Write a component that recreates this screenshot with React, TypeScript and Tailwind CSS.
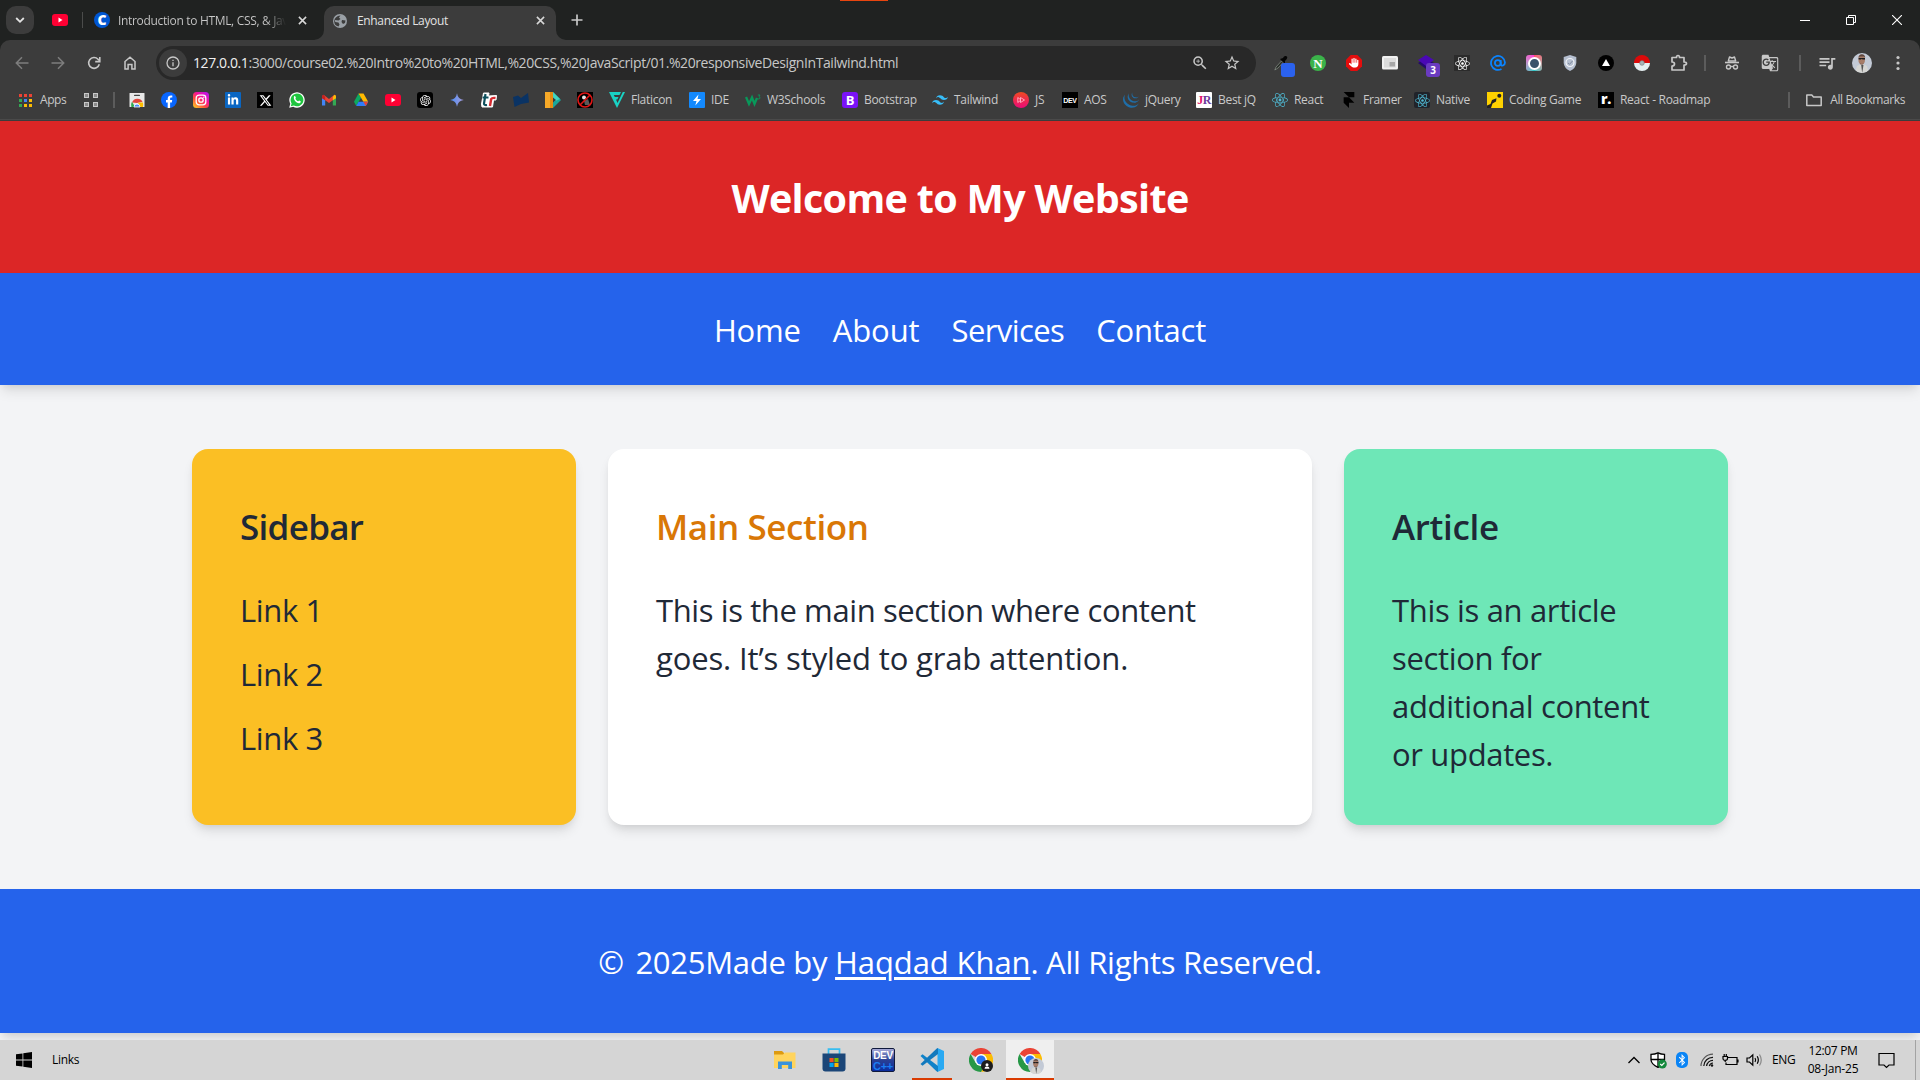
import React from "react";
import {
  FaLinkedinIn,
  FaXTwitter,
  FaReact,
  FaBluetoothB,
  FaHand,
} from "react-icons/fa6";
import { SiFramer, SiTailwindcss, SiJquery } from "react-icons/si";
import { RiOpenaiFill } from "react-icons/ri";
import { MdStarBorder, MdZoomIn, MdQueueMusic, MdOutlineExtension, MdGTranslate } from "react-icons/md";

/* ---------- small drawings ---------- */

const YouTube = () => (
  <svg viewBox="0 0 16 16" className="size-4">
    <rect y="2" width="16" height="12" rx="3" fill="#ff0033" />
    <path d="M6.500 5.600v4.800l4-2.400z" fill="#fff" />
  </svg>
);

const ChromeLogo = ({ className }: { className?: string }) => (
  <svg viewBox="0 0 24 24" className={className}>
    <path d="M12 12 L1.600 6 A12 12 0 0 1 22.400 6 L12 6z" fill="#ea4335" />
    <path d="M12 6 H22.400 A12 12 0 0 1 12 24 L17.200 15z" fill="#fbbc04" />
    <path d="M1.600 6 A12 12 0 0 0 12 24 L17.200 15 L12 12 L6.800 15z" fill="#279847" />
    <circle cx="12" cy="12" r="6" fill="#fff" />
    <circle cx="12" cy="12" r="4.600" fill="#2a75f0" />
  </svg>
);

const Instagram = () => (
  <svg viewBox="0 0 16 16" className="size-4">
    <defs>
      <linearGradient id="ig" x1="0.1" y1="1" x2="0.9" y2="0">
        <stop offset="0" stopColor="#ffc928" />
        <stop offset="0.35" stopColor="#ff4f3a" />
        <stop offset="0.65" stopColor="#f50fa0" />
        <stop offset="1" stopColor="#b418f0" />
      </linearGradient>
    </defs>
    <rect width="16" height="16" rx="3.500" fill="url(#ig)" />
    <rect x="3.200" y="3.200" width="9.600" height="9.600" rx="2.800" fill="none" stroke="#fff" strokeWidth="1.300" />
    <circle cx="8" cy="8" r="2.200" fill="none" stroke="#fff" strokeWidth="1.300" />
    <circle cx="10.800" cy="5.200" r="0.700" fill="#fff" />
  </svg>
);

const Facebook = () => (
  <svg viewBox="0 0 16 16" className="size-4">
    <circle cx="8" cy="8" r="8" fill="#0866ff" />
    <path d="M6.700 16V10.400H5V8h1.700V6.900c0-2.400 1.200-3.500 3.300-3.500.5 0 1 .1 1.300.1v2.100h-.9c-1 0-1.300.4-1.300 1.300V8h2.100l-.4 2.400H9.100V16z" fill="#fff" />
  </svg>
);

const WhatsApp = () => (
  <svg viewBox="0 0 16 16" className="size-4">
    <path d="M.2 15.800l1.100-4A7.700 7.700 0 1 1 4.200 14.700z" fill="#fff" />
    <path d="M1.800 14.200l.8-2.800a6.400 6.400 0 1 1 2.200 2.100z" fill="#1fc53f" />
    <path d="M5.200 4.300c.5-.5.9-.3 1.100.1l.6 1.300c.1.3-.5.8-.5 1 .4 1.100 1.600 2.200 2.700 2.600.3 0 .7-.9 1-.8l1.500.7c.4.3 0 1.300-.5 1.700-2.600 1.700-7.700-3.300-5.900-6.600z" fill="#fff" />
  </svg>
);

const Gmail = () => (
  <svg viewBox="0 0 16 16" className="size-4">
    <path d="M1 3.500V13.500H4.200V6z" fill="#4285f4" />
    <path d="M15 3.500V13.500H11.800V6z" fill="#34a853" />
    <path d="M1 4.200 L2.600 2.700 L8 7 L13.400 2.700 L15 4.200 V6 L8 11 L1 6z" fill="#ea4335" />
    <path d="M11.800 5 L13.400 2.700 Q15 3 15 4.500 V6.200 L11.800 8.300z" fill="#fbbc04" />
    <path d="M4.200 5 L2.600 2.700 Q1 3 1 4.500 V6.200 L4.200 8.300z" fill="#c5221f" />
  </svg>
);

const Drive = () => (
  <svg viewBox="0 0 16 16" className="size-4">
    <path d="M5.500 1.500 L1 9.800 L3.200 14 L8 5.800z" fill="#0da960" />
    <path d="M5.500 1.500 H10.500 L15.200 9.800 H10.400z" fill="#ffba00" />
    <path d="M3.200 14 L5.600 9.800 H15.200 L12.800 14z" fill="#2f7dfa" />
    <path d="M11.600 11.900 L10.400 9.800 H15.200 L12.800 14z" fill="#ea4335" />
  </svg>
);

const Webstore = () => (
  <svg viewBox="0 0 16 16" className="size-4">
    <rect x="0.500" y="1" width="15" height="14" rx="0.500" fill="#e8e8e8" />
    <rect x="5" y="2.800" width="6" height="1.300" rx="0.600" fill="#444" />
    <path d="M3 10.500 A5.900 5.900 0 0 1 13.600 9.800 L8 11z" fill="#e0443a" />
    <path d="M2.300 15 Q1.500 12 3 9.700 L6 15z" fill="#2da94f" />
    <path d="M9.500 10.500 H14 Q14.500 12.500 13.900 15 H9z" fill="#fdbd00" />
    <path d="M5 15 A3 3 0 0 1 11 15z" fill="#4a8bf5" stroke="#fff" strokeWidth="0.800" />
  </svg>
);

const Gemini = () => (
  <svg viewBox="0 0 16 16" className="size-4">
    <defs>
      <linearGradient id="gm" x1="0" y1="0" x2="1" y2="0">
        <stop offset="0" stopColor="#4c8df6" />
        <stop offset="1" stopColor="#a79bd8" />
      </linearGradient>
    </defs>
    <path d="M8 1.200 Q8.800 7.200 14.800 8 Q8.800 8.800 8 14.800 Q7.200 8.800 1.200 8 Q7.200 7.200 8 1.200z" fill="url(#gm)" />
  </svg>
);

const Tr = () => (
  <svg viewBox="0 0 16 16" className="size-4">
    <path d="M2.500 1 H8 L7.500 4 L15.500 3.500 L15 8 L12.500 8 L11.500 15 H1 L0.500 12 z" fill="#fff" stroke="#fff" strokeLinejoin="round" />
    <path d="M4.500 2 L3 11.500 Q3 13.500 6 13 M1.500 5.500 H7.500" fill="none" stroke="#0d4f5c" strokeWidth="2.200" />
    <path d="M9 14 L10.200 7 Q11 5.500 14.500 6" fill="none" stroke="#d62b31" strokeWidth="2.400" />
  </svg>
);

const NavyFlag = () => (
  <svg viewBox="0 0 16 16" className="size-4">
    <path d="M0 5 L5 3.500 L8 6 L15 1 L16 10.500 L8 12 L1.500 15z" fill="#0a3364" />
  </svg>
);

const PlayDoor = () => (
  <svg viewBox="0 0 16 16" className="size-4">
    <path d="M0 0 H5 V16 H0z" fill="#f7a928" />
    <path d="M5 0 H8 V16 H5z" fill="#e58a11" />
    <path d="M8 0 L16 8 L8 16z" fill="#18a79b" />
    <path d="M8 0 L15 7 L8 10z" fill="#3fd3c0" />
    <path d="M8 5.500 L11 8 L8 10.500z" fill="#3c3c3c" />
  </svg>
);

const Forbidden = () => (
  <svg viewBox="0 0 16 16" className="size-4">
    <rect width="16" height="16" fill="#000" />
    <circle cx="7" cy="5.500" r="2" fill="#e5e5e5" />
    <path d="M7 9 L11 7 L13 13 H8z" fill="#5a5a5a" />
    <circle cx="8" cy="8" r="7" fill="none" stroke="#e01616" strokeWidth="1.600" />
    <path d="M3 13 L13 3" stroke="#e01616" strokeWidth="1.600" />
  </svg>
);

const Flaticon = () => (
  <svg viewBox="0 0 16 16" className="size-4">
    <path d="M0 0 H12 L10.500 3 H4.800 L5.800 5 H9.500 L8.300 7.500 H7 L8.500 11 L13.800 0 H16 L8 16z" fill="#19d3c5" />
  </svg>
);

const Bolt = () => (
  <svg viewBox="0 0 16 16" className="size-4">
    <rect width="16" height="16" rx="1" fill="#1389fd" />
    <path d="M9.500 2.500 L4 9 H7.500 L6.300 13.500 L12 7 H8.500z" fill="#fff" />
  </svg>
);

const W3 = () => (
  <svg viewBox="0 0 16 16" className="size-4">
    <path d="M1 5 L4 12 L7 5.500 L9.500 12 L12 6" fill="none" stroke="#08985a" strokeWidth="2.300" />
    <path d="M12.800 3 H15 L14 4.500 Q15.500 5 14.800 6.500 Q14 7.300 12.800 6.800" fill="none" stroke="#08985a" strokeWidth="0.900" />
  </svg>
);

const Tile = ({ className, children }: { className: string; children: React.ReactNode }) => (
  <span className={"flex size-4 shrink-0 items-center justify-center leading-none " + className}>{children}</span>
);

const PlayDisc = () => (
  <svg viewBox="0 0 16 16" className="size-4">
    <defs>
      <linearGradient id="pd" x1="0" y1="0" x2="0" y2="1">
        <stop offset="0" stopColor="#f04a22" />
        <stop offset="1" stopColor="#ea0a78" />
      </linearGradient>
    </defs>
    <circle cx="8" cy="8" r="8" fill="url(#pd)" />
    <path d="M4.800 5.500 L8 8 L4.800 10.500z M7.500 5.500 L11.500 8 L7.500 10.500z" fill="none" stroke="#ffb3c8" strokeWidth="0.900" />
  </svg>
);

const Pencils = () => (
  <svg viewBox="0 0 16 16" className="size-4">
    <rect width="16" height="16" fill="#ffd200" />
    <circle cx="12.300" cy="3.800" r="2" fill="#222" />
    <path d="M0 16 V13.500 L3.500 12 L5 8 L9.500 6.200 L9 9.500 L5.500 11.500 L4 16z" fill="#222" />
  </svg>
);

const Folder = () => (
  <svg viewBox="0 0 18 16" className="h-4 w-[18px]" fill="none" stroke="#c7c7c7" strokeWidth="1.500">
    <path d="M1.800 3 H6.800 L8.500 5 H16.200 V13.500 H1.800z" strokeLinejoin="round" />
  </svg>
);

const Portrait = ({ id, className }: { id: string; className: string }) => (
  <svg viewBox="0 0 20 20" className={className}>
    <clipPath id={id}>
      <circle cx="10" cy="10" r="10" />
    </clipPath>
    <g clipPath={"url(#" + id + ")"}>
      <rect width="20" height="20" fill="#c3cad6" />
      <path d="M3 20 L5 13 L10 10.500 L15 13 L17 20z" fill="#d6d6d3" />
      <path d="M9.200 12 L10.200 20 L11.500 12z" fill="#555" />
      <ellipse cx="9.700" cy="6.500" rx="3.300" ry="4.700" fill="#a67c68" />
      <path d="M6.300 4.800 Q7 1 10 1.200 Q13 1.400 13.200 4.800 L12 3.500 H7.500z" fill="#5d463e" />
      <path d="M6.500 5 H13 V6.500 H10.500 L9.800 5.700 L9 6.500 H6.800z" fill="#1c1c1e" />
      <path d="M7.500 10 Q10 12 12 10 L11 11.500 H8.500z" fill="#6b4c40" />
    </g>
  </svg>
);

/* ---------- tab strip ---------- */

const Cross = () => (
  <svg viewBox="0 0 10 10" className="size-[9px]" stroke="#d8d8d8" strokeWidth="1.700">
    <path d="M1 1 L9 9 M9 1 L1 9" />
  </svg>
);

function TabStrip() {
  return (
    <div className="relative flex h-10 items-center bg-[#202221]">
      <span className="absolute left-[840px] top-0 h-px w-12 bg-[#e8450f]" />
      <button className="ml-1.5 flex size-7 items-center justify-center rounded-[10px] bg-[#3c3c3c]">
        <svg viewBox="0 0 10 10" className="size-[10px]" fill="none" stroke="#e3e3e3" strokeWidth="1.800">
          <path d="M1.200 3 L5 6.800 L8.800 3" />
        </svg>
      </button>
      <span className="ml-[18px]">
        <YouTube />
      </span>
      <span className="ml-[14px] h-4 w-px bg-[#4b4c4b]" />
      <Tile className="ml-[11px] rounded-full bg-[#0056d2] text-[14px] font-extrabold text-white">C</Tile>
      <span className="ml-2 w-[168px] overflow-hidden whitespace-nowrap bg-linear-to-r from-[#c9c9c9] from-88% to-transparent bg-clip-text pt-0.5 text-xs leading-4 tracking-[-0.33px] text-transparent">
        Introduction to HTML, CSS, &amp; JavaScript
      </span>
      <span className="ml-[12px]">
        <Cross />
      </span>
      <div className="relative ml-[17px] flex h-[34px] w-[232px] items-center self-end rounded-t-[10px] bg-[#3c3c3c] pb-[5px]">
        <svg viewBox="0 0 10 10" className="absolute -left-2.5 bottom-0 size-2.5">
          <path d="M10 0 V10 H0 A10 10 0 0 0 10 0z" fill="#3c3c3c" />
        </svg>
        <svg viewBox="0 0 10 10" className="absolute -right-2.5 bottom-0 size-2.5">
          <path d="M0 0 V10 H10 A10 10 0 0 1 0 0z" fill="#3c3c3c" />
        </svg>
        <svg viewBox="0 0 14 14" className="ml-[9px] size-[14px]">
          <circle cx="7" cy="7" r="7" fill="#9aa0a6" />
          <path d="M7.500 1.500 L6 3.500 L7.500 5 L5.500 6.500 L2 6 L2.200 8 L5.500 8.500 L6.500 10.500 L5.500 12.500 Q1 11.500 1.200 7 Q1.800 2 7.500 1.500z M9 6 L12.500 6.500 L12 9 L10 10 L8.500 8z" fill="#3c3c3c" />
        </svg>
        <span className="ml-[10px] w-[179px] pt-px text-xs leading-4 tracking-[-0.35px] text-[#e3e3e3]">Enhanced Layout</span>
        <Cross />
      </div>
      <svg viewBox="0 0 12 12" className="ml-[15px] size-3" stroke="#c7c7c7" strokeWidth="1.700">
        <path d="M6 0.500 V11.500 M0.500 6 H11.500" />
      </svg>
      <div className="ml-auto flex items-center gap-9 pr-[18px]">
        <svg viewBox="0 0 10 10" className="size-2.5" shapeRendering="crispEdges">
          <rect y="5" width="10" height="1" fill="#fff" />
        </svg>
        <svg viewBox="0 0 10 10" className="size-2.5" fill="none" stroke="#fff">
          <path d="M0.500 2.500 H7.500 V9.500 H0.500z M2.500 2.500 V0.500 H9.500 V7.500 H7.500" />
        </svg>
        <svg viewBox="0 0 10 10" className="size-2.5" stroke="#fff" strokeWidth="1.100">
          <path d="M0 0 L10 10 M10 0 L0 10" />
        </svg>
      </div>
    </div>
  );
}

/* ---------- toolbar ---------- */

const Slot = ({ children }: { children: React.ReactNode }) => (
  <span className="flex w-9 shrink-0 items-center justify-center">{children}</span>
);

function Toolbar() {
  return (
    <div className="flex h-[46px] items-center pl-1">
      <Slot>
        <svg viewBox="0 0 14 14" className="size-[14px]" fill="none" stroke="#7d7d7d" strokeWidth="1.500">
          <path d="M13.500 7 H1.500 M7 1.200 L1.300 7 L7 12.800" />
        </svg>
      </Slot>
      <Slot>
        <svg viewBox="0 0 14 14" className="size-[14px]" fill="none" stroke="#7d7d7d" strokeWidth="1.500">
          <path d="M0.500 7 H12.500 M7 1.200 L12.700 7 L7 12.800" />
        </svg>
      </Slot>
      <Slot>
        <svg viewBox="0 0 14 14" className="size-[14px]" fill="none" stroke="#c7c7c7" strokeWidth="1.600">
          <path d="M12.300 8.300 A5.400 5.400 0 1 1 11 3.200 L12.200 4.600" />
          <path d="M12.800 1 V5.600 H8.200" />
        </svg>
      </Slot>
      <Slot>
        <svg viewBox="0 0 14 14" className="size-[14px]" fill="none" stroke="#c7c7c7" strokeWidth="1.500">
          <path d="M2 13 V5.500 L7 1.300 L12 5.500 V13 H8.900 V8.500 H5.100 V13z" />
        </svg>
      </Slot>
      <div className="ml-2 flex h-[34px] w-[1100px] items-center rounded-full bg-[#282828] pl-[3px]">
        <span className="flex size-7 items-center justify-center rounded-full bg-[#3c3c3c]">
          <svg viewBox="0 0 14 14" className="size-[14px]" fill="none" stroke="#c7c7c7" strokeWidth="1.300">
            <circle cx="7" cy="7" r="6" />
            <path d="M7 6.300 V10.200 M7 3.800 V5.100" />
          </svg>
        </span>
        <span className="ml-[6px] text-[14px] leading-5 tracking-[-0.41px] text-[#c7c7c7]">
          <span className="text-[#f0f0f0]">127.0.0.1</span>
          :3000/course02.%20Intro%20to%20HTML,%20CSS,%20JavaScript/01.%20responsiveDesignInTailwind.html
        </span>
        <MdZoomIn className="ml-auto size-[18px] text-[#c7c7c7]" />
        <MdStarBorder className="ml-[14px] mr-[15px] size-[18px] text-[#c7c7c7]" />
      </div>
      <div className="ml-2 flex">
        <Slot>
          <span className="relative size-4">
            <svg viewBox="0 0 16 16" className="size-4">
              <path d="M0.800 15 L2 12 L7.500 6 L9 7.500 L4 13z" fill="#262b26" stroke="#9aa59a" strokeWidth="0.600" />
              <path d="M6 4 L11 9 L11 6 Q15 2 12 1 Q10 0.500 9 3z" fill="#050505" />
            </svg>
            <span className="absolute left-[7px] top-2 size-[14px] rounded-[3px] bg-[#2b62ee]" />
          </span>
        </Slot>
        <Slot>
          <Tile className="rounded-full bg-[#3bb34a] font-['Liberation_Serif'] text-[13px] font-bold text-white">N</Tile>
        </Slot>
        <Slot>
          <svg viewBox="0 0 16 16" className="size-4">
            <path d="M4.700 0 H11.300 L16 4.700 V11.300 L11.300 16 H4.700 L0 11.300 V4.700z" fill="#e40d0d" />
            <FaHand x="3" y="2.800" size={10} color="#fff" />
          </svg>
        </Slot>
        <Slot>
          <svg viewBox="0 0 16 16" className="size-4">
            <rect y="1" width="16" height="13.500" rx="1.500" fill="#f1f1f1" />
            <rect x="2" y="3" width="12" height="9.500" fill="#dcdcdc" />
            <rect x="7.500" y="7" width="5.500" height="4.500" fill="#a7a7a7" />
          </svg>
        </Slot>
        <Slot>
          <span className="relative size-4">
            <svg viewBox="0 0 16 16" className="size-4">
              <path d="M0 8 L8 3 L16 8 L8 14z" fill="#240a6b" />
              <path d="M0 5 L8 0 L16 5 L8 11z" fill="#4a08b5" />
            </svg>
            <span className="absolute left-2 top-2 flex size-[14px] items-center justify-center rounded-[3px] bg-[#6a3bc0] text-[10px] font-bold leading-none text-white">
              3
            </span>
          </span>
        </Slot>
        <Slot>
          <Tile className="bg-[#2b2b2b]">
            <FaReact className="size-[15px] text-white" />
          </Tile>
        </Slot>
        <Slot>
          <svg viewBox="0 0 16 16" className="size-4" fill="none" stroke="#0a84ff" strokeWidth="1.800">
            <circle cx="7.800" cy="8" r="2.900" />
            <path d="M10.700 5 V9 Q11 11 13 10.500 Q15 9.500 15 7.500 A7 7 0 1 0 11.500 14" />
          </svg>
        </Slot>
        <Slot>
          <Tile className="rounded-[3px] bg-conic from-[#ff4d6d] via-[#18c7c7] to-[#ff37d0]">
            <span className="size-[13px] rounded-full border-2 border-white bg-[#39536b]" />
          </Tile>
        </Slot>
        <Slot>
          <svg viewBox="0 0 16 16" className="size-4">
            <path d="M8 0 L14.300 2 V8 Q14 13 8 16 Q2 13 1.700 8 V2z" fill="#b5bfd0" />
            <circle cx="8" cy="7.500" r="4" fill="none" stroke="#f2f4f8" strokeWidth="1.200" />
            <path d="M6 8 L7.500 9.300 L10.500 6" fill="none" stroke="#7d889c" />
          </svg>
        </Slot>
        <Slot>
          <svg viewBox="0 0 16 16" className="size-4">
            <circle cx="8" cy="8" r="8" fill="#000" />
            <path d="M8 4 L12 11 H4z" fill="#fff" />
          </svg>
        </Slot>
        <Slot>
          <svg viewBox="0 0 16 16" className="size-4">
            <path d="M0 8 A8 8 0 0 1 16 8z" fill="#dc0a0a" />
            <path d="M0 8 A8 8 0 0 0 16 8z" fill="#e6f0f2" />
            <circle cx="8" cy="8" r="2.300" fill="#a9b4b7" stroke="#7d8588" strokeWidth="0.700" />
          </svg>
        </Slot>
        <Slot>
          <svg viewBox="0 0 18 18" className="ml-0.5 size-[18px]" fill="none" stroke="#c7c7c7" strokeWidth="1.700" strokeLinejoin="round">
            <path d="M2 3.500 H6.500 Q6.500 1.500 8 1.500 Q9.500 1.500 9.500 3.500 H14 V8 Q16.500 8 16.500 9.500 Q16.500 11 14 11 V16 H2 V12 Q4.500 12 4.500 10 Q4.500 8 2 8z" />
          </svg>
        </Slot>
      </div>
      <span className="ml-2 h-4 w-0.5 bg-[#5c5c5c]" />
      <svg viewBox="0 0 16 16" className="ml-[18px] size-4" fill="none" stroke="#c7c7c7" strokeWidth="1.400">
        <path d="M4.300 6 L5.500 2 L8 3 L10.500 2 L11.700 6z" strokeLinejoin="round" />
        <path d="M1 7.500 H15" strokeWidth="1.600" />
        <circle cx="4.500" cy="12" r="2" />
        <circle cx="11.500" cy="12" r="2" />
        <path d="M6.500 11.500 H9.500" />
      </svg>
      <MdGTranslate className="ml-[21px] size-[18px] text-[#c7c7c7]" />
      <span className="ml-5 h-4 w-0.5 bg-[#5c5c5c]" />
      <MdQueueMusic className="ml-4 size-5 text-[#c7c7c7]" />
      <Portrait id="profile" className="ml-[15px] size-5" />
      <svg viewBox="0 0 4 16" className="ml-6 h-4 w-1" fill="#c7c7c7">
        <circle cx="2" cy="2.500" r="1.600" />
        <circle cx="2" cy="8" r="1.600" />
        <circle cx="2" cy="13.500" r="1.600" />
      </svg>
    </div>
  );
}

/* ---------- bookmarks ---------- */

const shortcuts = [
  <Webstore />,
  <Facebook />,
  <Instagram />,
  <Tile className="rounded-[1px] bg-[#0a66c2]"><FaLinkedinIn className="size-3 text-white" /></Tile>,
  <Tile className="bg-black"><FaXTwitter className="size-[13px] text-white" /></Tile>,
  <WhatsApp />,
  <Gmail />,
  <Drive />,
  <YouTube />,
  <Tile className="rounded-[3px] bg-black"><RiOpenaiFill className="size-[13px] text-white" /></Tile>,
  <Gemini />,
  <Tr />,
  <NavyFlag />,
  <PlayDoor />,
  <Forbidden />,
];

const bookmarks: { label: string; width: string; icon: React.ReactNode }[] = [
  { label: "Flaticon", width: "w-20", icon: <Flaticon /> },
  { label: "IDE", width: "w-14", icon: <Bolt /> },
  { label: "W3Schools", width: "w-[97px]", icon: <W3 /> },
  { label: "Bootstrap", width: "w-[90px]", icon: <Tile className="rounded-[3px] bg-[#7a12f7] text-[13px] font-bold text-white">B</Tile> },
  { label: "Tailwind", width: "w-[81px]", icon: <SiTailwindcss className="size-4 text-[#38bdf8]" /> },
  { label: "JS", width: "w-[49px]", icon: <PlayDisc /> },
  {
    label: "AOS",
    width: "w-[61px]",
    icon: <Tile className="bg-black font-['Liberation_Sans'] text-[7px] font-bold tracking-[-0.3px] text-white">DEV</Tile>,
  },
  { label: "jQuery", width: "w-[73px]", icon: <SiJquery className="size-4 text-[#1f6ea8]" /> },
  {
    label: "Best jQ",
    width: "w-[76px]",
    icon: (
      <Tile className="rounded-[1px] bg-white font-['Liberation_Serif'] text-[12px] font-bold tracking-[-0.5px]">
        <span className="text-[#e3126c]">J</span>
        <span className="text-[#6b3a9a]">R</span>
      </Tile>
    ),
  },
  { label: "React", width: "w-[69px]", icon: <FaReact className="size-4 text-[#4fb9d3]" /> },
  { label: "Framer", width: "w-[73px]", icon: <SiFramer className="size-4 text-black" /> },
  {
    label: "Native",
    width: "w-[73px]",
    icon: <Tile className="rounded-[2px] bg-[#20232a]"><FaReact className="size-[15px] text-[#4fb9d3]" /></Tile>,
  },
  { label: "Coding Game", width: "w-[111px]", icon: <Pencils /> },
  {
    label: "React - Roadmap",
    width: "w-[130px]",
    icon: <Tile className="bg-black pb-0.5 text-[14px] font-extrabold text-white">r.</Tile>,
  },
];

const appDots = [
  "bg-[#ea4335]", "bg-[#ea4335]", "bg-[#ea4335]",
  "bg-[#34a853]", "bg-[#4285f4]", "bg-[#fbbc04]",
  "bg-[#34a853]", "bg-[#fbbc04]", "bg-[#fbbc04]",
];

function BookmarksBar() {
  return (
    <div className="flex h-[34px] items-center border-b border-[#4a4a4a] pb-[5px] pl-[19px] text-xs text-[#c9c9c9]">
      <span className="grid grid-cols-3 gap-[2px]">
        {appDots.map((c, i) => (
          <span key={i} className={"size-[3px] " + c} />
        ))}
      </span>
      <span className="ml-2 w-11 tracking-[-0.42px]">Apps</span>
      <span className="grid grid-cols-2 gap-1">
        {[0, 1, 2, 3].map((i) => (
          <span key={i} className="size-[5px] border border-[#c7c7c7] bg-[#8a8a8a]" />
        ))}
      </span>
      <span className="ml-[15px] h-4 w-0.5 bg-[#5c5c5c]" />
      <div className="ml-[14px] flex gap-4 pr-4">
        {shortcuts.map((icon, i) => (
          <span key={i} className="size-4">{icon}</span>
        ))}
      </div>
      {bookmarks.map((b) => (
        <span key={b.label} className={"flex shrink-0 items-center gap-1.5 whitespace-nowrap tracking-[-0.3px] " + b.width}>
          {b.icon}
          {b.label}
        </span>
      ))}
      <span className="ml-auto h-4 w-0.5 bg-[#5c5c5c]" />
      <span className="ml-[15px] mr-[15px] flex items-center gap-[7px] tracking-[-0.4px]">
        <Folder />
        All Bookmarks
      </span>
    </div>
  );
}

/* ---------- web page ---------- */

const cardShadow = "shadow-[0_8px_12px_-2px_rgba(0,0,0,0.1),0_4px_8px_-4px_rgba(0,0,0,0.1)]";

function Page() {
  return (
    <div className="flex h-[919px] flex-col overflow-hidden bg-[#f3f4f6] text-[31px] leading-[48px] text-[#1f2937]">
      <header className="bg-[#dc2626] px-12 pb-[47px] pt-[49px] text-center text-white">
        <h1 className="text-[39.5px] font-bold leading-14 tracking-[-0.67px]">Welcome to My Website</h1>
      </header>
      <nav className="relative flex justify-center gap-8 bg-[#2563eb] pb-[31px] pt-[33px] text-white shadow-[0_8px_12px_-2px_rgba(0,0,0,0.1),0_4px_8px_-4px_rgba(0,0,0,0.1)]">
        <a className="tracking-[-0.2px]">Home</a>
        <a className="tracking-[-0.1px]">About</a>
        <a className="tracking-[-0.6px]">Services</a>
        <a className="tracking-[-0.2px]">Contact</a>
      </nav>
      <main className="mx-auto flex w-[1536px] gap-8 py-16">
        <aside className={"w-96 rounded-2xl bg-[#fbbf24] px-12 pb-12 pt-[50px] " + cardShadow}>
          <h2 className="text-[35px] font-semibold leading-14 tracking-[-0.7px]">Sidebar</h2>
          <ul className="mt-[31px] flex flex-col gap-4 tracking-[-0.35px]">
            <li>Link 1</li>
            <li>Link 2</li>
            <li>Link 3</li>
          </ul>
        </aside>
        <section className={"flex-1 rounded-2xl bg-white px-12 pb-12 pt-[50px] " + cardShadow}>
          <h2 className="text-[35px] font-semibold leading-14 tracking-[-0.42px] text-[#d97706]">Main Section</h2>
          <p className="mt-[31px]">
            <span className="tracking-[-0.4px]">This is the main section where content</span>
            <br />
            <span className="tracking-[-0.14px]">goes. It’s styled to grab attention.</span>
          </p>
        </section>
        <article className={"w-96 rounded-2xl bg-[#6ee7b7] px-12 pb-[47px] pt-[50px] " + cardShadow}>
          <h2 className="text-[35px] font-semibold leading-14 tracking-[-0.33px]">Article</h2>
          <p className="mt-[31px] tracking-[-0.34px]">
            This is an article
            <br />
            section for
            <br />
            additional content
            <br />
            or updates.
          </p>
        </article>
      </main>
      <footer className="bg-[#2563eb] pb-[47px] pt-[49px] text-center tracking-[-0.28px] text-white shadow-[0_8px_12px_-2px_rgba(0,0,0,0.1),0_4px_8px_-4px_rgba(0,0,0,0.1)]">
        <span className="mr-1">©</span> 2025Made by{" "}
        <a className="tracking-[-0.1px] underline decoration-[3px] underline-offset-[3px]">Haqdad Khan</a>. All Rights Reserved.
      </footer>
    </div>
  );
}

/* ---------- taskbar ---------- */

const TaskSlot = ({ className, children }: { className?: string; children: React.ReactNode }) => (
  <span className={"relative flex h-10 w-12 items-center justify-center " + (className ?? "")}>{children}</span>
);

function Taskbar() {
  return (
    <div className="flex h-10 items-center bg-[#d5d5d5] text-xs text-black">
      <svg viewBox="0 0 16 16" className="ml-4 size-4">
        <path d="M0 2.300 L6.500 1.400 V7.600 H0z M7.300 1.300 L16 0 V7.600 H7.300z M0 8.400 H6.500 V14.600 L0 13.700z M7.300 8.400 H16 V16 L7.300 14.700z" />
      </svg>
      <span className="ml-5 w-[709px] tracking-[-0.3px]">Links</span>
      <TaskSlot>
        <svg viewBox="0 0 22 18" className="h-[18px] w-[22px]">
          <path d="M0 0 H8 L10 2 V5 H0z" fill="#dd9a10" />
          <path d="M0 3.500 H9 L11 1.500 H21.500 V17 H0z" fill="#ffd45e" />
          <path d="M4 18 V10.500 H18 V18 H14.200 V14 H7.800 V18z" fill="#3a93dc" />
        </svg>
      </TaskSlot>
      <TaskSlot className="ml-px">
        <svg viewBox="0 0 24 24" className="size-6">
          <path d="M6.500 6 V1.200 H17.500 V6" fill="none" stroke="#37bdf0" strokeWidth="1.700" />
          <path d="M0.500 5.500 H23.500 V20.500 Q23.500 23.500 20.500 23.500 H3.500 Q0.500 23.500 0.500 20.500z" fill="#1b4678" />
          <path d="M7.500 10 H11.600 V14.100 H7.500z" fill="#f25022" />
          <path d="M12.400 10 H16.500 V14.100 H12.400z" fill="#7fba00" />
          <path d="M7.500 14.900 H11.600 V19 H7.500z" fill="#00a4ef" />
          <path d="M12.400 14.900 H16.500 V19 H12.400z" fill="#ffb900" />
        </svg>
      </TaskSlot>
      <TaskSlot className="ml-px">
        <span className="flex size-6 flex-col items-center rounded-[2px] border border-[#101a3c] bg-linear-to-b from-[#a9abd8] via-[#2a3f94] to-[#0a2d9e] font-['Liberation_Sans'] font-bold tracking-[-0.3px]">
          <span className="mt-px text-[10px] leading-[11px] text-white">DEV</span>
          <span className="text-[11px] leading-[10px] text-[#1b7df2]">C++</span>
        </span>
      </TaskSlot>
      <TaskSlot className="ml-px">
        <svg viewBox="0 0 24 24" className="size-6">
          <path d="M17.500 0 L24 3 V21 L17.500 24z" fill="#29a9f2" />
          <path d="M0.500 8 L2.500 6.300 L18 18 V24 L16.500 23.300z" fill="#0f82c9" />
          <path d="M0.500 16 L2.500 17.700 L18 6 V0 L16.500 0.700z" fill="#1279bd" />
        </svg>
        <span className="absolute bottom-0 left-1 h-0.5 w-10 bg-[#da3b01]" />
      </TaskSlot>
      <TaskSlot className="ml-px">
        <ChromeLogo className="size-6" />
        <span className="absolute left-6 top-5 flex size-3 items-center justify-center rounded-full bg-[#1d1d1d]">
          <svg viewBox="0 0 6 6" className="size-1.5" fill="#fff">
            <circle cx="3" cy="1.800" r="1.500" />
            <path d="M0.500 5.800 Q0.500 3.500 3 3.500 Q5.500 3.500 5.500 5.800z" />
          </svg>
        </span>
      </TaskSlot>
      <TaskSlot className="ml-px bg-[#efefef]">
        <ChromeLogo className="size-6" />
        <Portrait id="taskface" className="absolute left-[22px] top-[18px] size-4" />
        <span className="absolute bottom-0 left-0 h-0.5 w-12 bg-[#da3b01]" />
      </TaskSlot>

      <div className="ml-auto flex h-full items-center">
        <svg viewBox="0 0 12 8" className="h-2 w-3" fill="none" stroke="#000" strokeWidth="1.300">
          <path d="M0.500 7 L6 1.500 L11.500 7" />
        </svg>
        <svg viewBox="0 0 17 17" className="ml-[10px] size-[17px]">
          <path d="M8 0.800 Q11 2.300 14.500 2.300 V8 Q14 12.500 8 15.300 Q1.500 12.500 1 8 V2.300 Q5 2.300 8 0.800z" fill="#fff" stroke="#000" strokeWidth="1.300" />
          <path d="M8 1 V15 M1 7.500 H14.500" stroke="#000" strokeWidth="1.300" />
          <circle cx="12.300" cy="12" r="4.500" fill="#14893c" />
          <path d="M10.200 12 L11.800 13.500 L14.500 10.600" fill="none" stroke="#fff" strokeWidth="1.200" />
        </svg>
        <span className="ml-[9px] flex h-4 w-3 items-center justify-center rounded-[5px] bg-[#0a84f5]">
          <FaBluetoothB className="size-3 text-white" />
        </span>
        <svg viewBox="0 0 14 14" className="ml-3 size-[14px]" fill="none" stroke="#111" strokeWidth="1.200">
          <path d="M1 13 A12 12 0 0 1 13 1.200" stroke="#555" />
          <path d="M3.800 13 A9 9 0 0 1 13 4.300" />
          <path d="M6.600 13 A6.400 6.400 0 0 1 13 7.300" />
          <path d="M9.300 13 A4 4 0 0 1 13 10" />
          <circle cx="12" cy="12.500" r="1.200" fill="#111" stroke="none" />
        </svg>
        <svg viewBox="0 0 17 14" className="ml-[8px] h-[14px] w-[17px]" fill="none" stroke="#000" strokeWidth="1.200">
          <path d="M6 4.500 H15 V11.500 H4 V9.500 M16 6.500 V9.500" />
          <path d="M1 3.500 H5.500 V5.500 Q5.500 7.300 3.200 7.300 Q1 7.300 1 5.500z M2.200 1 V3.500 M4.300 1 V3.500 M3.200 7.300 V9" />
        </svg>
        <svg viewBox="0 0 17 14" className="ml-[7px] h-[14px] w-[17px]" fill="none" stroke="#000" strokeWidth="1.200">
          <path d="M1 5 H3.500 L6.800 1.800 V12.200 L3.500 9 H1z" />
          <path d="M9 5 Q10.300 7 9 9 M11.200 3.300 Q13.500 7 11.200 10.700" />
          <path d="M13.500 1.500 Q17 7 13.500 12.500" stroke="#888" />
        </svg>
        <span className="ml-[9px] w-9 tracking-[-0.4px]">ENG</span>
        <span className="flex w-[50px] flex-col items-center whitespace-nowrap leading-[18px]">
          <span className="tracking-[-0.35px]">12:07 PM</span>
          <span className="tracking-[-0.2px]">08-Jan-25</span>
        </span>
        <svg viewBox="0 0 17 17" className="ml-5 size-[17px]" fill="none" stroke="#000" strokeWidth="1.200">
          <path d="M1 1.500 H16 V13 H11 L8.500 15.500 L6 13 H1z" />
        </svg>
        <span className="ml-5 mr-1 h-full w-px bg-[#a3a3a3]" />
      </div>
    </div>
  );
}

export default function App() {
  return (
    <div className="h-[1080px] w-[1920px] overflow-hidden bg-[#202221] font-['Open_Sans',sans-serif]">
      <TabStrip />
      <div className="rounded-t-[10px] bg-[#3c3c3c]">
        <Toolbar />
        <BookmarksBar />
      </div>
      <div className="h-px bg-[#3c3c3c]" />
      <Page />
      <Taskbar />
    </div>
  );
}
